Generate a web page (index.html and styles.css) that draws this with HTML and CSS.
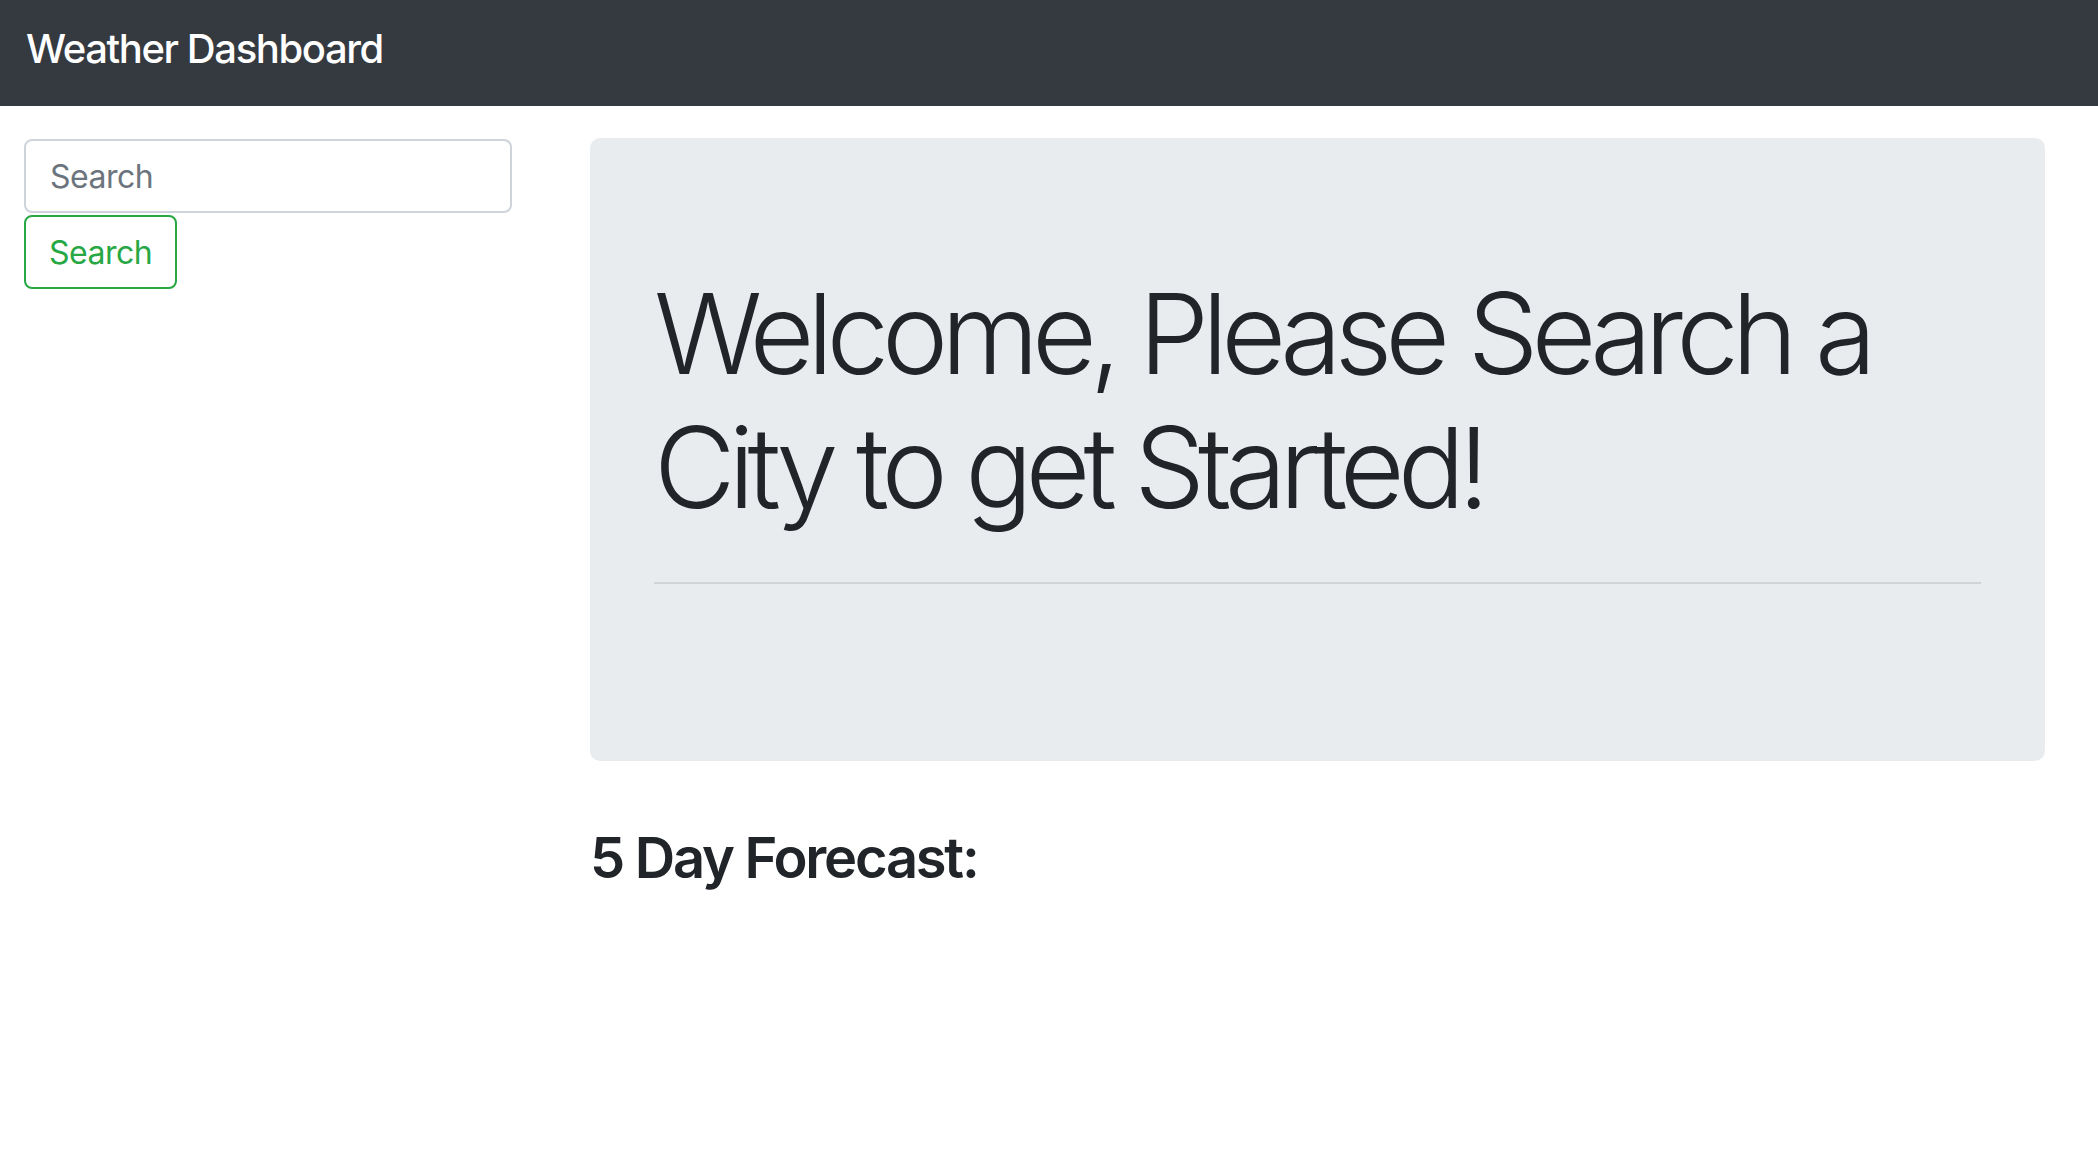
FILE: index.html
```html
<!DOCTYPE html>
<html lang="en">
<head>
<meta charset="utf-8">
<title>Weather Dashboard</title>
<link rel="stylesheet" href="styles.css">
</head>
<body>
<nav class="navbar">
  <span class="brand">Weather Dashboard</span>
</nav>
<main class="main">
  <aside class="sidebar">
    <input class="search-input" type="text" placeholder="Search">
    <button class="search-btn" type="button">Search</button>
  </aside>
  <section class="content">
    <div class="jumbotron">
      <h1 class="display">Welcome, Please Search a City to get Started!</h1>
      <hr class="divider">
    </div>
    <h3 class="forecast-title">5 Day Forecast:</h3>
  </section>
</main>
</body>
</html>
```

FILE: styles.css
```css
* { box-sizing: border-box; }

html, body {
  margin: 0;
  padding: 0;
  background: #ffffff;
  font-family: "Inter", "Liberation Sans", sans-serif;
  color: #212529;
}

.navbar {
  height: 106px;
  background: #343a40;
  padding: 19px 26px 0;
}

.brand {
  display: block;
  color: #ffffff;
  font-size: 40px;
  line-height: 60px;
  font-weight: 500;
  letter-spacing: -0.035em;
}

.main {
  display: flex;
  padding: 32px 53px 0 24px;
  gap: 78px;
}

.sidebar {
  width: 488px;
  flex: none;
  display: flex;
  flex-direction: column;
  align-items: flex-start;
  padding-top: 1px;
}

.search-input {
  width: 100%;
  height: 74px;
  border: 2px solid #ced4da;
  border-radius: 8px;
  padding: 0 24px;
  font-family: inherit;
  font-size: 32px;
  color: #495057;
  background: #fff;
  letter-spacing: -0.015em;
  outline: none;
}

.search-input::placeholder {
  color: #6c757d;
  opacity: 1;
}

.search-btn {
  margin-top: 2px;
  height: 74px;
  border: 2px solid #28a745;
  border-radius: 8px;
  padding: 0 23px;
  background: #fff;
  color: #28a745;
  font-family: inherit;
  font-size: 32px;
  letter-spacing: -0.015em;
  cursor: pointer;
}

.content {
  flex: 1;
  min-width: 0;
}

.jumbotron {
  background: #e9ecef;
  border-radius: 10px;
  padding: 128px 64px 145px;
  margin-bottom: 64px;
}

.display {
  margin: 0;
  font-size: 112px;
  font-weight: 300;
  line-height: 1.2;
  letter-spacing: -0.063em;
  color: #212529;
}

.divider {
  margin: 47px 0 32px;
  border: 0;
  border-top: 2px solid rgba(0, 0, 0, 0.1);
}

.forecast-title {
  margin: 0;
  font-size: 56px;
  font-weight: 600;
  line-height: 1.2;
  letter-spacing: -0.04em;
  color: #212529;
}
```
